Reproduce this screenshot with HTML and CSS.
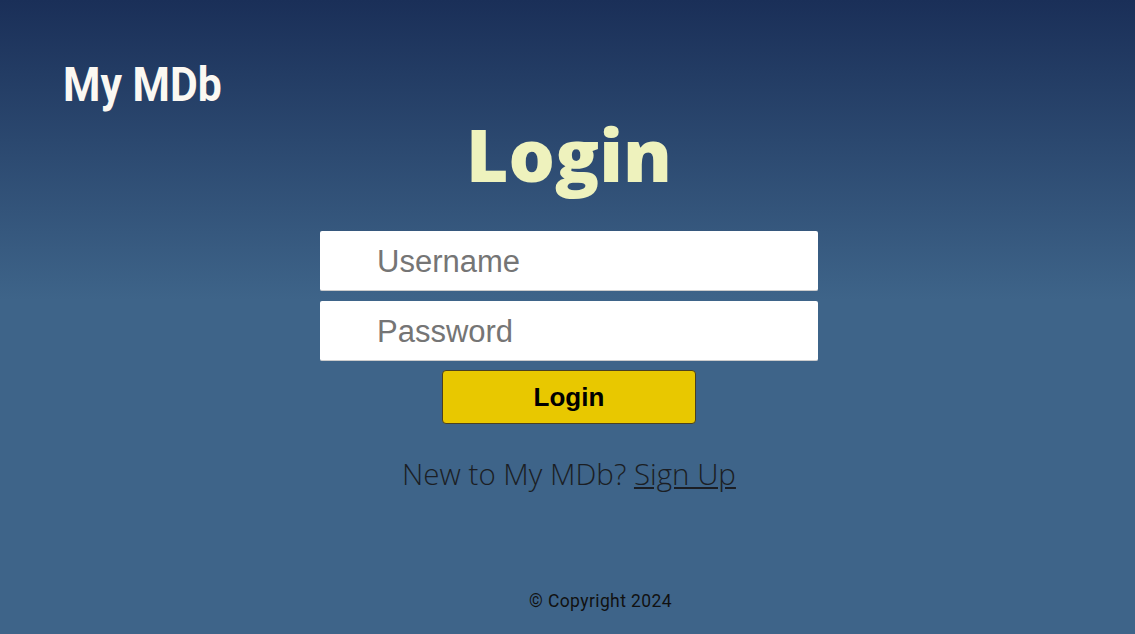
FILE: index.html
```html
<!DOCTYPE html>
<html>
<head>
<meta charset="utf-8">
<link rel="stylesheet" href="styles.css">
</head>
<body>
<div class="page">
  <header class="header">
    <div class="logo">My MDb</div>
  </header>
  <main class="main">
    <h1 class="title">Login</h1>
    <form class="form">
      <input class="field" type="text" placeholder="Username">
      <input class="field" type="password" placeholder="Password">
      <button class="btn" type="button">Login</button>
    </form>
    <p class="signup">New to My MDb? <a href="#" class="signup-link">Sign Up</a></p>
  </main>
  <footer class="footer">© Copyright 2024</footer>
</div>
</body>
</html>
```
FILE: styles.css
```css
* { box-sizing: border-box; }
html, body { margin: 0; padding: 0; height: 100%; }
body {
  background: linear-gradient(to bottom, #1a2f58 0px, #3e6489 300px, #3e6489 100%);
  font-family: "Liberation Sans", Arial, sans-serif;
}
.page {
  min-height: 634px;
  display: flex;
  flex-direction: column;
}
.header {
  padding: 57px 0 0 63px;
  height: 116px;
}
.logo {
  font-family: Roboto, "Liberation Sans", sans-serif;
  font-weight: 700;
  font-size: 48px;
  line-height: 56px;
  color: #fbf8f2;
  transform: scaleX(0.89);
  transform-origin: left center;
  white-space: nowrap;
}
.main {
  display: flex;
  flex-direction: column;
  align-items: center;
  padding-left: 3px;
}
.title {
  margin: -2px 0 0;
  font-family: "Open Sans", sans-serif;
  font-weight: 800;
  font-size: 73px;
  line-height: 80px;
  color: #eef2bd;
  height: 117px;
}
.form {
  display: flex;
  flex-direction: column;
  align-items: center;
  gap: 10px;
}
.field {
  width: 498px;
  height: 60px;
  border: none;
  border-bottom: 1px solid #ccc;
  border-radius: 2px;
  background: #fff;
  padding: 2px 0 0 57px;
  font-family: "Liberation Sans", Arial, sans-serif;
  font-size: 31px;
  color: #333;
}
.field::placeholder { color: #757575; }
.btn {
  width: 254px;
  height: 54px;
  background: #e8c800;
  border: 1px solid #4a4020;
  border-radius: 4px;
  font-family: "Liberation Sans", Arial, sans-serif;
  font-weight: 700;
  font-size: 26px;
  color: #000;
  margin-top: -1px;
}
.signup {
  margin: 29px 0 0;
  font-family: "Open Sans", sans-serif;
  font-weight: 300;
  font-size: 29.5px;
  color: #1b1e24;
}
.signup-link { color: #1b1e24; text-decoration: underline; }
.footer {
  margin-top: auto;
  padding: 0 0 23px 66px;
  text-align: center;
  font-family: Roboto, sans-serif;
  font-size: 17.5px;
  letter-spacing: 0.4px;
  color: #111;
}
```
